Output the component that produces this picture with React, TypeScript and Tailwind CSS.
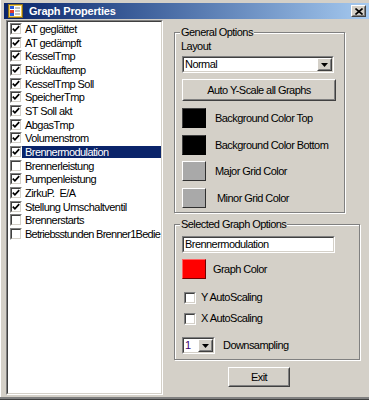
import type { ReactNode } from 'react';

const items: [string, boolean][] = [
  ['AT geglättet', true],
  ['AT gedämpft', true],
  ['KesselTmp', true],
  ['Rücklauftemp', true],
  ['KesselTmp Soll', true],
  ['SpeicherTmp', true],
  ['ST Soll akt', true],
  ['AbgasTmp', true],
  ['Volumenstrom', true],
  ['Brennermodulation', true],
  ['Brennerleistung', false],
  ['Pumpenleistung', true],
  ['ZirkuP.  E/A', true],
  ['Stellung Umschaltventil', true],
  ['Brennerstarts', false],
  ['Betriebsstunden Brenner1Bedie', false],
];

// classic 2px sunken frame
function Sunken({ className, children }: { className?: string; children?: ReactNode }) {
  return (
    <div className={`border border-t-[#808080] border-l-[#808080] border-b-white border-r-white ${className ?? ''}`}>
      <div className="h-full w-full border border-t-[#404040] border-l-[#404040] border-b-[#d4d0c8] border-r-[#d4d0c8] bg-white">
        {children}
      </div>
    </div>
  );
}

function Raised({ className, children }: { className?: string; children?: ReactNode }) {
  return (
    <div className={`border border-t-white border-l-white border-b-[#404040] border-r-[#404040] ${className ?? ''}`}>
      <div className="flex h-full w-full items-center justify-center border border-t-[#d4d0c8] border-l-[#d4d0c8] border-b-[#808080] border-r-[#808080] bg-[#d4d0c8]">
        {children}
      </div>
    </div>
  );
}

function CheckBox({ checked }: { checked: boolean }) {
  return (
    <Sunken className="h-[12px] w-[12px] shrink-0">
      {checked && (
        <svg width="8" height="8" viewBox="0 0 8 8">
          <polyline points="0.8,3.6 2.9,5.8 7.2,1.2" fill="none" stroke="#000" strokeWidth="1.7" />
        </svg>
      )}
    </Sunken>
  );
}

function Arrow() {
  return (
    <svg width="7" height="4" viewBox="0 0 7 4">
      <polygon points="0,0 7,0 3.5,4" fill="#000" />
    </svg>
  );
}

function Combo({ value, className, textClass }: { value: string; className: string; textClass?: string }) {
  return (
    <Sunken className={className}>
      <div className="flex h-full">
        <div className={`flex-1 pl-[1px] leading-[13px] ${textClass ?? ''}`}>{value}</div>
        <Raised className="h-full w-[15px]">
          <Arrow />
        </Raised>
      </div>
    </Sunken>
  );
}

function Swatch({ fill }: { fill: 'black' | 'gray' | 'red' }) {
  const cls =
    fill === 'black'
      ? 'bg-black border-t-[#404040] border-l-[#404040] border-b-black border-r-black'
      : fill === 'red'
        ? 'bg-[#ff0000] border-t-[#ff6060] border-l-[#ff6060] border-b-[#700000] border-r-[#700000]'
        : 'bg-[#a9a9a9] border-t-white border-l-white border-b-[#303030] border-r-[#303030]';
  return <div className={`h-[20px] w-[24px] shrink-0 border ${cls}`} />;
}

export default function App() {
  return (
    <div className="flex h-[400px] w-[369px] flex-col bg-[#d4d0c8] pl-[4px] pt-[3px] font-['Liberation_Sans',Arial,sans-serif] text-[11px] tracking-[-0.55px] text-black shadow-[inset_0_-1px_0_#404040,inset_0_-3px_0_#808080,inset_1px_0_0_#fff]">
      {/* title bar */}
      <div className="flex h-[16px] items-center bg-linear-to-r from-[#0a246a] to-[#a6caf0] pr-[3px]">
        <svg width="15" height="14" viewBox="0 0 15 14" className="ml-[4px] shrink-0">
          <rect x="0.5" y="0.5" width="14" height="13" fill="#f2c94c" stroke="#8a6d1a" />
          <rect x="2" y="2" width="11" height="10" fill="#fff" />
          <rect x="2" y="2" width="4" height="3" fill="#2a5bd7" />
          <rect x="2" y="6" width="4" height="3" fill="#e03a2a" />
          <rect x="2" y="9" width="4" height="3" fill="#2a5bd7" />
          <line x1="7" y1="4" x2="12" y2="4" stroke="#888" />
          <line x1="7" y1="7" x2="12" y2="7" stroke="#888" />
          <line x1="7" y1="10" x2="12" y2="10" stroke="#888" />
        </svg>
        <span className="ml-[6px] text-[11px] font-bold tracking-[-0.2px] text-white">Graph Properties</span>
        <Raised className="ml-auto h-[12px] w-[15px]">
          <svg width="8" height="7" viewBox="0 0 8 7">
            <path d="M0.5 0.5 L7.5 6.5 M7.5 0.5 L0.5 6.5" stroke="#000" strokeWidth="1.6" />
          </svg>
        </Raised>
      </div>

      <div className="mt-[1px] flex">
        {/* list */}
        <Sunken className="ml-[2px] h-[375px] w-[157px]">
          <div className="flex flex-col">
            {items.map(([name, checked], i) => {
              const sel = i === 9;
              const last = i === items.length - 1;
              return (
                <div key={name} className="flex h-[13.7px] items-center">
                  <div className="ml-[2px]">
                    <CheckBox checked={checked} />
                  </div>
                  <div
                    className={`h-[12px] flex-1 overflow-hidden whitespace-pre pl-[3px] leading-[12px] ${
                      sel ? 'bg-[#0a246a] text-white' : ''
                    } ${last ? 'tracking-[-0.72px]' : ''}`}
                  >
                    {name}
                  </div>
                </div>
              );
            })}
          </div>
        </Sunken>

        {/* options */}
        <div className="ml-[11px] flex w-[186px] flex-col">
          <fieldset className="mt-[6px] w-[171px] border border-[#808080] pb-[4px] pl-[7px] shadow-[inset_1px_1px_0_#fff,1px_1px_0_#fff]">
            <legend className="-ml-[2px] bg-[#d4d0c8] px-[1px] leading-[13px]">General Options</legend>
            <div className="mt-[1px] -ml-[1px] leading-[13px]">Layout</div>
            <Combo value="Normal" className="mt-[3px] h-[17px] w-[152px]" />
            <Raised className="mt-[6px] h-[22px] w-[154px]">Auto Y-Scale all Graphs</Raised>
            <div className="mt-[7px] flex items-center">
              <Swatch fill="black" />
              <span className="ml-[9px]">Background Color Top</span>
            </div>
            <div className="mt-[7px] flex items-center">
              <Swatch fill="black" />
              <span className="ml-[9px]">Background Color Bottom</span>
            </div>
            <div className="mt-[6px] flex items-center">
              <Swatch fill="gray" />
              <span className="ml-[9px]">Major Grid Color</span>
            </div>
            <div className="mt-[7px] flex items-center">
              <Swatch fill="gray" />
              <span className="ml-[11px]">Minor Grid Color</span>
            </div>
          </fieldset>

          <fieldset className="mt-[5px] w-[186px] border border-[#808080] pb-[5px] pl-[7px] shadow-[inset_1px_1px_0_#fff,1px_1px_0_#fff]">
            <legend className="-ml-[2px] bg-[#d4d0c8] px-[1px] leading-[13px]">Selected Graph Options</legend>
            <Sunken className="mt-[5px] h-[17px] w-[153px]">
              <div className="pl-[1px] leading-[13px]">Brennermodulation</div>
            </Sunken>
            <div className="mt-[6px] flex items-center">
              <Swatch fill="red" />
              <span className="ml-[7px]">Graph Color</span>
            </div>
            <div className="mt-[12px] flex h-[13px] items-center">
              <div className="ml-[2px]">
                <CheckBox checked={false} />
              </div>
              <span className="ml-[5px]">Y AutoScaling</span>
            </div>
            <div className="mt-[8px] flex h-[13px] items-center">
              <div className="ml-[2px]">
                <CheckBox checked={false} />
              </div>
              <span className="ml-[5px]">X AutoScaling</span>
            </div>
            <div className="mt-[12px] flex items-center">
              <Combo value="1" className="h-[17px] w-[33px]" textClass="text-[#400070]" />
              <span className="ml-[8px]">Downsampling</span>
            </div>
          </fieldset>

          <Raised className="ml-[54px] mt-[7px] h-[20px] w-[62px]">Exit</Raised>
        </div>
      </div>
    </div>
  );
}
